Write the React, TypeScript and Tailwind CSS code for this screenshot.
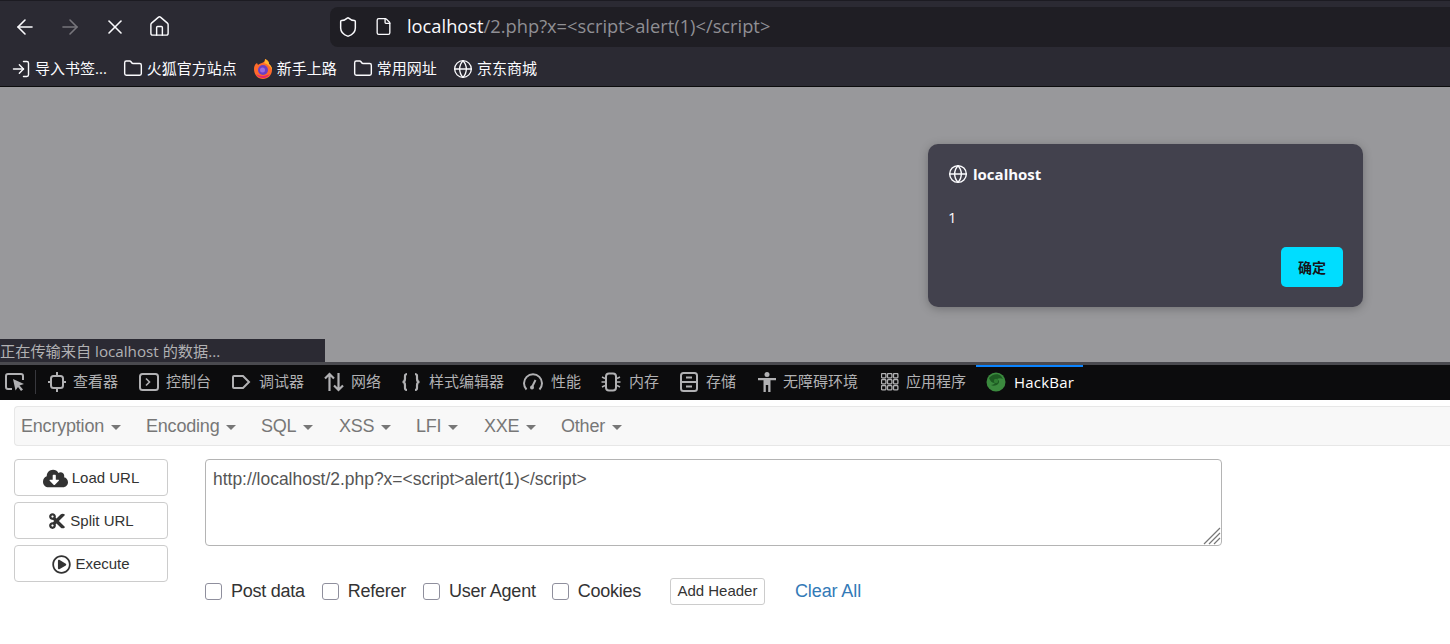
import React from 'react';
import { ArrowLeft, ArrowRight, X, Home, Shield, File, Folder, Globe, LogIn } from 'lucide-react';
import { FaCloudDownloadAlt, FaCut, FaRegPlayCircle } from 'react-icons/fa';

const uiFont = '[font-family:"Open_Sans","Noto_Sans_CJK_SC",sans-serif]';

function FoxLogo({ size = 20, green = false }: { size?: number; green?: boolean }) {
    if (green) {
        return (
            <svg width={size} height={size} viewBox="0 0 20 20">
                <circle cx="10" cy="10" r="9.5" fill="#3b8a3e" />
                <path d="M3 6c3-4 9-5 12-2l2 3c-2-1-4-1-6 0 2 1 3 3 1 5-2 2-5 2-7 1 2 0 3-1 4-2-3 0-5-2-6-5z" fill="#1d5a22" />
                <circle cx="10" cy="9" r="2.2" fill="#2f7d32" />
            </svg>
        );
    }
    return (
        <svg width={size} height={size} viewBox="0 0 20 20">
            <path d="M1 10c0-3 1-5 3-6l1 2c1-1 3-2 4-2 2-1 3-2 3-4 3 1 4 3 4 5 2 2 3 3 3 6 0 5-4 9-9 9s-9-4-9-10z" fill="#ff6a2b" />
            <path d="M12 0c3 1 4 3 4 5 2 2 3 3 3 6-2-4-4-6-8-7 1-1 1-2 1-4z" fill="#ffb52e" />
            <circle cx="10" cy="11" r="5" fill="#6a3fc4" />
            <circle cx="9.5" cy="11" r="2.5" fill="#9a6be0" />
            <path d="M3 15c2 3 5 4 7 4 3 0 6-2 7-4-3 2-10 3-14 0z" fill="#e6246b" />
        </svg>
    );
}

function Bookmark({ icon, label }: { icon: React.ReactNode; label: string }) {
    return (
        <div className="flex items-center gap-[4px]">
            <span className="flex w-[20px] justify-center">{icon}</span>
            <span className="text-[15px] leading-none text-[#fbfbfe]">{label}</span>
        </div>
    );
}

function DevTab({ icon, label, width, gap = 'gap-[6px]' }: { icon: React.ReactNode; label: string; width: string; gap?: string }) {
    return (
        <div className={`flex h-full items-center ${gap} ${width}`}>
            <span className="flex w-[20px] justify-center">{icon}</span>
            <span className="text-[15px] leading-none text-[#b1b1b3]">{label}</span>
        </div>
    );
}

function MenuItem({ label, width }: { label: string; width: string }) {
    return (
        <div className={`flex items-center gap-[7px] ${width}`}>
            <span className="text-[18px] leading-none tracking-[-0.2px] text-[#777777]">{label}</span>
            <span className="mt-[2px] h-0 w-0 border-x-[5px] border-t-[5px] border-x-transparent border-t-[#777777]" />
        </div>
    );
}

function SideButton({ icon, label }: { icon: React.ReactNode; label: string }) {
    return (
        <button className="flex h-[37px] w-[154px] items-center justify-center gap-[4px] rounded-[4px] border border-[#cccccc] bg-white pt-[1px] text-[15px] text-[#333333]">
            {icon}
            {label}
        </button>
    );
}

function Check({ label, gap }: { label: string; gap: string }) {
    return (
        <label className={`flex items-center gap-[9px] ${gap}`}>
            <span className="h-[17px] w-[17px] rounded-[3px] border border-[#8f8f9d] bg-white" />
            <span className="-mt-[2px] text-[18px] leading-none tracking-[-0.25px] text-[#333333]">{label}</span>
        </label>
    );
}

export default function App() {
    return (
        <div className={`flex h-[644px] w-[1450px] flex-col overflow-hidden bg-white ${uiFont}`}>
            {/* browser chrome */}
            <div className="flex h-[52px] items-center border-t border-[#1c1b22] bg-[#2b2a33] pl-[13px]">
                <ArrowLeft size={24} strokeWidth={1.6} className="text-[#fbfbfe]" />
                <ArrowRight size={24} strokeWidth={1.6} className="ml-[21px] text-[#77767c]" />
                <X size={24} strokeWidth={1.6} className="ml-[21px] text-[#fbfbfe]" />
                <Home size={23} strokeWidth={1.5} className="ml-[21px] text-[#fbfbfe]" />
                <div className="ml-[159px] flex h-[40px] flex-1 items-center rounded-l-[8px] bg-[#1f1e24] pl-[7px]">
                    <Shield size={22} strokeWidth={1.6} className="text-[#fbfbfe]" />
                    <File size={19} strokeWidth={1.7} className="ml-[15px] text-[#fbfbfe]" />
                    <span className="ml-[14px] text-[18.3px] leading-none text-[#fbfbfe]">
                        localhost<span className="text-[#8f8f94]">/2.php?x=&lt;script&gt;alert(1)&lt;/script&gt;</span>
                    </span>
                </div>
            </div>
            <div className="flex h-[34px] items-center gap-[16px] bg-[#2b2a33] pl-[11px] pb-[1px]">
                <Bookmark icon={<LogIn size={20} strokeWidth={1.7} className="text-[#fbfbfe]" />} label="导入书签..." />
                <Bookmark icon={<Folder size={21} strokeWidth={1.7} className="text-[#fbfbfe]" />} label="火狐官方站点" />
                <Bookmark icon={<FoxLogo />} label="新手上路" />
                <Bookmark icon={<Folder size={21} strokeWidth={1.7} className="text-[#fbfbfe]" />} label="常用网址" />
                <Bookmark icon={<Globe size={20} strokeWidth={1.6} className="text-[#fbfbfe]" />} label="京东商城" />
            </div>

            {/* page behind the alert */}
            <div className="relative flex h-[276px] justify-end border-t border-[#0c0c0d] bg-[#98989b] pt-[57px] pr-[87px]">
                <div className="flex h-[163px] w-[435px] flex-col rounded-[10px] bg-[#42414d] px-[20px] pt-[20px] shadow-[0_2px_10px_rgba(0,0,0,0.25)]">
                    <div className="flex items-center gap-[5px]">
                        <Globe size={20} strokeWidth={1.7} className="text-[#fbfbfe]" />
                        <span className="text-[15px] font-bold leading-none text-[#fbfbfe]">localhost</span>
                    </div>
                    <div className="mt-[26px] text-[15px] leading-none text-[#fbfbfe]">1</div>
                    <button className="mt-[22px] h-[40px] w-[62px] self-end rounded-[5px] bg-[#00ddff] text-[14px] font-bold text-[#15141a]">确定</button>
                </div>
                <div className="absolute bottom-0 left-0 flex h-[23px] w-[325px] items-center bg-[#2b2a33] pt-[2px] text-[15.2px] leading-none text-[#b1b1b3]">
                    正在传输来自 localhost 的数据...
                </div>
            </div>

            {/* devtools tabs */}
            <div className="flex h-[38px] items-center border-t-[3px] border-[#4a4a4f] bg-[#0c0c0d] pb-[2px]">
                <svg width="22" height="22" viewBox="0 0 22 22" className="ml-[4px]" fill="none" stroke="#b1b1b3" strokeWidth="2">
                    <path d="M8 18H4a2 2 0 0 1-2-2V5a2 2 0 0 1 2-2h13a2 2 0 0 1 2 2v4" />
                    <path d="M9 8l11 5-4.500 1.500 3.500 4-2 1.500-3-4-2.500 3.500z" fill="#b1b1b3" stroke="none" />
                </svg>
                <div className="ml-[9px] mr-[11px] h-[24px] w-px bg-[#38383d]" />
                <DevTab width="w-[92px]" label="查看器" icon={
                    <svg width="18" height="20" viewBox="0 0 18 20" fill="none" stroke="#b1b1b3" strokeWidth="2">
                        <rect x="3" y="4" width="12" height="12" rx="2.500" />
                        <path d="M9 0v4M9 16v4M0 10h3M15 10h3" />
                    </svg>
                } />
                <DevTab width="w-[92px]" gap="gap-[7px]" label="控制台" icon={
                    <svg width="20" height="18" viewBox="0 0 20 18" fill="none" stroke="#b1b1b3" strokeWidth="2">
                        <rect x="1" y="1" width="18" height="16" rx="2.500" />
                        <path d="M7 5.500L10.500 9 7 12.500" strokeWidth="1.600" />
                    </svg>
                } />
                <DevTab width="w-[93px]" gap="gap-[8px]" label="调试器" icon={
                    <svg width="20" height="16" viewBox="0 0 20 16" fill="none" stroke="#b1b1b3" strokeWidth="2">
                        <path d="M3 2h9l6 6-6 6H3a1 1 0 0 1-1-1V3a1 1 0 0 1 1-1z" />
                    </svg>
                } />
                <DevTab width="w-[77px]" gap="gap-[7px]" label="网络" icon={
                    <svg width="20" height="20" viewBox="0 0 20 20" fill="none" stroke="#b1b1b3" strokeWidth="2.200">
                        <path d="M5.500 19V2M1 6.500l4.500-4.500L10 6.500M14.500 1v17M10 13.500l4.500 4.500 4.500-4.500" />
                    </svg>
                } />
                <DevTab width="w-[122px]" gap="gap-[8px]" label="样式编辑器" icon={
                    <svg width="20" height="20" viewBox="0 0 20 20" fill="none" stroke="#b1b1b3" strokeWidth="2.200">
                        <path d="M6 2C3.500 2 4 4 4 6.500 4 9 3.500 10 1.500 10 3.500 10 4 11 4 13.500 4 16 3.500 18 6 18M14 2c2.500 0 2 2 2 4.500 0 2.500.5 3.500 2.500 3.500-2 0-2.500 1-2.500 3.500 0 2.500.5 4.500-2 4.500" />
                    </svg>
                } />
                <DevTab width="w-[78px]" gap="gap-[8px]" label="性能" icon={
                    <svg width="20" height="20" viewBox="0 0 20 20" fill="none" stroke="#b1b1b3" strokeWidth="2">
                        <path d="M3.500 17.500A9 9 0 1 1 16.500 17.500" />
                        <path d="M9 15l3.500-7" />
                        <circle cx="9" cy="15.500" r="2" fill="#b1b1b3" stroke="none" />
                    </svg>
                } />
                <DevTab width="w-[78px]" gap="gap-[8px]" label="内存" icon={
                    <svg width="20" height="20" viewBox="0 0 20 20" fill="none" stroke="#b1b1b3" strokeWidth="1.500">
                        <rect x="5" y="1.500" width="10" height="17" rx="3" strokeWidth="2" />
                        <path d="M1 5l3 1.500M0.500 10H4M1 15l3-1.500M19 5l-3 1.500M19.500 10H16M19 15l-3-1.500" />
                    </svg>
                } />
                <DevTab width="w-[78px]" gap="gap-[7px]" label="存储" icon={
                    <svg width="18" height="20" viewBox="0 0 18 20" fill="none" stroke="#b1b1b3" strokeWidth="2">
                        <rect x="1" y="1" width="16" height="18" rx="2.500" />
                        <path d="M1 10h16M6 5.500h6M6 14.500h6" />
                    </svg>
                } />
                <DevTab width="w-[123px]" label="无障碍环境" icon={
                    <svg width="18" height="20" viewBox="0 0 18 20" fill="#b1b1b3">
                        <circle cx="9" cy="2.500" r="2.500" />
                        <path d="M0 6h18v2.200h-5.500V20h-2.300v-7H7.800v7H5.500V8.200H0z" />
                    </svg>
                } />
                <DevTab width="w-[96px]" label="应用程序" icon={
                    <svg width="18" height="18" viewBox="0 0 18 18">
                        {[1, 7, 13].flatMap((y) => [1, 7, 13].map((x) => (
                            <rect key={`${x}-${y}`} x={x - 0.5} y={y - 0.5} width="4.400" height="4.400" rx="1" fill="none" stroke="#b1b1b3" strokeWidth="1.300" />
                        )))}
                    </svg>
                } />
                <div className="-mb-[2px] flex h-[calc(100%+2px)] w-[107px] items-center gap-[8px] border-t-2 border-[#0a84ff] pb-[3px] pl-[10px]">
                    <FoxLogo green />
                    <span className="text-[15px] leading-none tracking-[0.2px] text-white">HackBar</span>
                </div>
            </div>

            {/* hackbar panel */}
            <div className="flex flex-1 flex-col bg-white pl-[14px] pt-[6px] [font-family:'Liberation_Sans',sans-serif]">
                <div className="flex h-[40px] items-center rounded-l-[4px] border border-r-0 border-[#e7e7e7] bg-[#f8f8f8] pl-[6px]">
                    <MenuItem label="Encryption" width="w-[125px]" />
                    <MenuItem label="Encoding" width="w-[115px]" />
                    <MenuItem label="SQL" width="w-[78px]" />
                    <MenuItem label="XSS" width="w-[77px]" />
                    <MenuItem label="LFI" width="w-[68px]" />
                    <MenuItem label="XXE" width="w-[77px]" />
                    <MenuItem label="Other" width="w-[70px]" />
                </div>
                <div className="mt-[13px] flex">
                    <div className="flex w-[154px] flex-col gap-[6px]">
                        <SideButton icon={<FaCloudDownloadAlt size={25} />} label="Load URL" />
                        <SideButton icon={<FaCut size={18} />} label="Split URL" />
                        <SideButton icon={<FaRegPlayCircle size={19} />} label="Execute" />
                    </div>
                    <div className="ml-[37px] flex flex-col">
                        <div className="relative h-[87px] w-[1017px] rounded-[4px] border border-[#b4b4b4] px-[7px] pt-[9px] text-[17.45px] leading-[20px] text-[#555555]">
                            http://localhost/2.php?x=&lt;script&gt;alert(1)&lt;/script&gt;
                            <svg width="18" height="18" viewBox="0 0 18 18" className="absolute bottom-0 right-0" stroke="#777777" strokeWidth="1.200">
                                <path d="M1 17L17 1M6 17L17 6M11 17l6-6" />
                            </svg>
                        </div>
                        <div className="mt-[32px] flex items-center">
                            <Check label="Post data" gap="mr-[17px]" />
                            <Check label="Referer" gap="mr-[17px]" />
                            <Check label="User Agent" gap="mr-[16px]" />
                            <Check label="Cookies" gap="mr-[29px]" />
                            <button className="h-[27px] w-[95px] rounded-[3px] border border-[#cccccc] text-[15px] text-[#333333]">Add Header</button>
                            <span className="ml-[30px] -mt-[2px] text-[18px] leading-none tracking-[-0.1px] text-[#337ab7]">Clear All</span>
                        </div>
                    </div>
                </div>
            </div>
        </div>
    );
}
